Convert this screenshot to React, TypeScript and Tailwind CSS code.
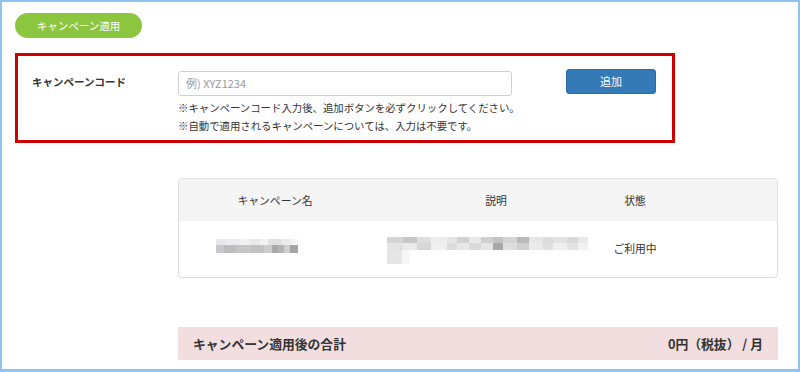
import React from "react";

type Block = { w: number; c: string };

const Mosaic = ({ rows }: { rows: { h: number; blocks: Block[] }[] }) => (
  <div className="flex flex-col">
    {rows.map((r, i) => (
      <div key={i} className="flex" style={{ height: r.h }}>
        {r.blocks.map((b, j) => (
          <div key={j} style={{ width: b.w, background: b.c }} />
        ))}
      </div>
    ))}
  </div>
);

const col1Rows = [
  {
    h: 6,
    blocks: [
      { w: 10, c: "#e8e8ea" },
      { w: 14, c: "#ececec" },
      { w: 10, c: "#f1f1f1" },
      { w: 10, c: "#e9e9e9" },
      { w: 8, c: "#f3f3f3" },
      { w: 14, c: "#e2e2e2" },
      { w: 10, c: "#ececec" },
      { w: 6, c: "#f6f6f6" },
    ],
  },
  {
    h: 8,
    blocks: [
      { w: 8, c: "#c9c9cb" },
      { w: 12, c: "#bdbdbf" },
      { w: 14, c: "#c6c6c6" },
      { w: 14, c: "#c2c2c4" },
      { w: 8, c: "#cdcdcd" },
      { w: 6, c: "#a9a9a9" },
      { w: 6, c: "#b5b5b5" },
      { w: 6, c: "#cfcfcf" },
      { w: 8, c: "#a5a5a7" },
    ],
  },
];

const col2Rows = [
  {
    h: 6,
    blocks: [
      { w: 16, c: "#d4d4d6" },
      { w: 14, c: "#c7c7c7" },
      { w: 14, c: "#dedede" },
      { w: 16, c: "#ededed" },
      { w: 10, c: "#e4e4e4" },
      { w: 12, c: "#d2d2d2" },
      { w: 12, c: "#e9e9e9" },
      { w: 12, c: "#cfcfcf" },
      { w: 10, c: "#c3c3c3" },
      { w: 14, c: "#d5d5d5" },
      { w: 12, c: "#b8b8b8" },
      { w: 14, c: "#e6e6e6" },
      { w: 10, c: "#dcdcdc" },
      { w: 14, c: "#e2e2e2" },
      { w: 11, c: "#d9d9d9" },
      { w: 10, c: "#e8e8e8" },
    ],
  },
  {
    h: 7,
    blocks: [
      { w: 16, c: "#e3e3e3" },
      { w: 14, c: "#eaeaea" },
      { w: 14, c: "#d7d7d7" },
      { w: 16, c: "#f0f0f0" },
      { w: 10, c: "#dcdcdc" },
      { w: 12, c: "#e8e8e8" },
      { w: 12, c: "#d9d9d9" },
      { w: 12, c: "#e6e6e6" },
      { w: 10, c: "#a8a8a8" },
      { w: 14, c: "#dedede" },
      { w: 12, c: "#d0d0d0" },
      { w: 14, c: "#ebebeb" },
      { w: 10, c: "#e0e0e0" },
      { w: 14, c: "#efefef" },
      { w: 11, c: "#e4e4e4" },
      { w: 10, c: "#f1f1f1" },
    ],
  },
  {
    h: 14,
    blocks: [
      { w: 15, c: "#e6e6e6" },
      { w: 8, c: "#f6f6f6" },
    ],
  },
];

export default function App() {
  return (
    <div
      className="w-[800px] h-[372px] border-2 border-b-[3px] border-[#90c4f0] bg-white overflow-hidden text-[#333]"
      style={{ fontFamily: '"Noto Sans CJK JP", "Noto Sans", sans-serif' }}
    >
      <div className="pl-[13px] pt-[11px]">
        <div className="w-[127px] h-[25px] rounded-full bg-[#8cc63f] text-white text-[10.5px] flex items-center justify-center">
          キャンペーン適用
        </div>

        <div className="mt-[15px] w-[660px] h-[90px] border-[3px] border-[#cc0000] flex">
          <div className="w-[160px] pl-[14px] pt-[13px] shrink-0">
            <div className="h-[25px] flex items-center text-[10.5px] font-bold">
              キャンペーンコード
            </div>
          </div>
          <div className="pt-[13px] w-[388px] shrink-0">
            <input
              className="w-[334px] h-[25px] border border-[#cfcfcf] rounded-[3px] px-[7px] text-[11px] placeholder:text-[#9a9a9a] outline-none"
              placeholder="例) XYZ1234"
            />
            <div className="mt-[3px] text-[10.4px] leading-[18px] whitespace-nowrap">
              <div>※キャンペーンコード入力後、追加ボタンを必ずクリックしてください。</div>
              <div>※自動で適用されるキャンペーンについては、入力は不要です。</div>
            </div>
          </div>
          <div className="pt-[13px]">
            <button className="w-[90px] h-[25px] bg-[#337ab7] border border-[#2e6da4] rounded-[3px] text-white text-[11px] flex items-center justify-center">
              追加
            </button>
          </div>
        </div>

        <div className="ml-[163px] mt-[35px] w-[600px] h-[100px] border border-[#dddddd] rounded-[4px] overflow-hidden">
          <div className="h-[42px] bg-[#f5f5f5] grid grid-cols-[192px_228px_72px_1fr] items-center text-[10.8px]">
            <div className="text-center">キャンペーン名</div>
            <div className="text-center pl-[22px]">説明</div>
            <div className="text-center">状態</div>
            <div />
          </div>
          <div className="h-[57px] grid grid-cols-[192px_228px_72px_1fr] items-center text-[10.8px]">
            <div className="pl-[37px] pb-[8px]">
              <Mosaic rows={col1Rows} />
            </div>
            <div className="pl-[16px] pt-[2px]">
              <Mosaic rows={col2Rows} />
            </div>
            <div className="text-center pb-[2px]">ご利用中</div>
            <div />
          </div>
        </div>

        <div className="ml-[163px] mt-[49px] w-[600px] h-[33px] bg-[#f2dede] flex items-center justify-between px-[15px] text-[12.8px] font-bold">
          <span>キャンペーン適用後の合計</span>
          <span>0円（税抜） / 月</span>
        </div>
      </div>
    </div>
  );
}
